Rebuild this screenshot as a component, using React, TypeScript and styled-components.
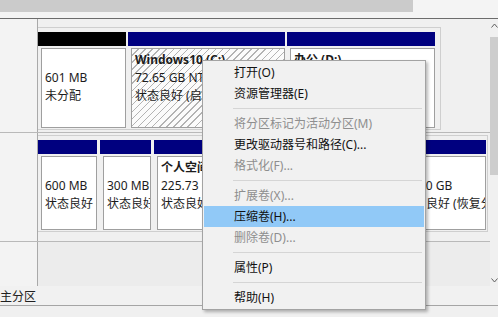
import React from "react";
import styled, { createGlobalStyle, css } from "styled-components";

const GlobalStyle = createGlobalStyle`
  html, body { margin: 0; padding: 0; }
  body {
    width: 498px;
    height: 317px;
    overflow: hidden;
    background: #f0f0f0;
    font-family: "Noto Sans", "Noto Sans CJK SC", sans-serif;
  }
  * { box-sizing: border-box; }
`;

const Page = styled.div`
  position: relative;
  width: 498px;
  height: 317px;
  display: flex;
  flex-direction: column;
  overflow: hidden;
  background: #f0f0f0;
`;

const TopStrip = styled.div`
  height: 18px;
  display: flex;
  background: #f4f4f4;
`;

const TitleBar = styled.div`
  width: 413px;
  height: 12px;
  background: #cbcbcb;
`;

const Rule = styled.div<{ $color: string }>`
  height: 1px;
  flex: none;
  background: ${(p) => p.$color};
`;

const Main = styled.div`
  display: flex;
  height: 267px;
`;

const DiskList = styled.div`
  width: 490px;
  display: flex;
  flex-direction: column;
`;

const DiskRow = styled.div<{ $h: number; $line?: boolean }>`
  display: flex;
  height: ${(p) => p.$h}px;
  flex: none;
  border-bottom: ${(p) => (p.$line ? "1px solid #b9b9b9" : "none")};
`;

const LabelCell = styled.div`
  width: 38px;
  border-right: 1px solid #a9a9a9;
  background: #f3f3f3;
`;

const DiskBody = styled.div<{ $top: number; $shade?: boolean }>`
  flex: 1;
  padding-top: ${(p) => p.$top}px;
  background: ${(p) => (p.$shade ? "#ececec" : "#f0f0f0")};
`;

const Frame = styled.div<{ $w: number; $gap: number }>`
  width: ${(p) => p.$w}px;
  display: flex;
  gap: ${(p) => p.$gap}px;
  border: 1px solid #cfcfcf;
  border-left: none;
  padding: 4px 0 1px 0;
`;

const Partition = styled.div<{ $w: number }>`
  width: ${(p) => p.$w}px;
  flex: none;
  display: flex;
  flex-direction: column;
`;

const Header = styled.div<{ $color: string }>`
  height: 14px;
  background: ${(p) => p.$color};
`;

const PartBody = styled.div<{ $h: number; $hatch?: boolean }>`
  height: ${(p) => p.$h}px;
  margin: 2px 0 0 3px;
  border: 1px solid #9f9f9f;
  padding: 2px 0 0 3px;
  overflow: hidden;
  white-space: nowrap;
  font-size: 12px;
  line-height: 18px;
  color: #1c1c1c;
  ${(p) =>
    p.$hatch
      ? css`
          background: repeating-linear-gradient(
            135deg,
            #fbfbfb 0 4px,
            #b3b3b3 4px 5px
          );
        `
      : css`
          background: #ffffff;
        `}
`;

const Line = styled.div<{ $bold?: boolean }>`
  height: 18px;
  font-weight: ${(p) => (p.$bold ? 700 : 400)};
`;

const Scrollbar = styled.div`
  width: 8px;
  display: flex;
  flex-direction: column;
  align-items: center;
  background: #f0f0f0;
`;

const ArrowBox = styled.div`
  height: 12px;
  width: 8px;
  display: flex;
  align-items: center;
  justify-content: center;
`;

const Thumb = styled.div`
  width: 8px;
  height: 138px;
  margin-top: 6px;
  background: #cdcdcd;
`;

const Spacer = styled.div`
  flex: 1;
`;

const Legend = styled.div`
  height: 19px;
  display: flex;
  align-items: center;
  font-size: 12px;
  color: #202020;
  padding-top: 1px;
  background: #f1f1f1;
`;

const Menu = styled.div`
  position: absolute;
  left: 202px;
  top: 60px;
  width: 224px;
  padding: 1px;
  background: #f1f1f1;
  border: 1px solid #a3a3a3;
  box-shadow: 2px 2px 3px rgba(0, 0, 0, 0.28);
  font-size: 12px;
`;

const Item = styled.div<{ $disabled?: boolean; $active?: boolean }>`
  height: 21px;
  line-height: 21px;
  padding-left: 30px;
  white-space: nowrap;
  color: ${(p) => (p.$disabled ? "#8e8e8e" : "#111111")};
  background: ${(p) => (p.$active ? "#91c9f7" : "transparent")};
`;

const Separator = styled.div`
  height: 9px;
  display: flex;
  align-items: center;
  padding-left: 29px;
  padding-right: 2px;
  &::after {
    content: "";
    flex: 1;
    height: 1px;
    background: #d5d5d5;
  }
`;

type Part = {
  w: number;
  color: string;
  lines: [string, string, string];
  hatch?: boolean;
};

const disk0: Part[] = [
  { w: 88, color: "#000000", lines: ["", "601 MB", "未分配"] },
  {
    w: 157,
    color: "#00007f",
    lines: ["Windows10 (C:)", "72.65 GB NTFS", "状态良好 (启动, 页面文件, 故障转储, 主分区)"],
    hatch: true,
  },
  { w: 148, color: "#00007f", lines: ["办公 (D:)", "150.00 GB NTFS", "状态良好 (主分区)"] },
];

const disk1: Part[] = [
  { w: 59, color: "#00007f", lines: ["", "600 MB", "状态良好 (EFI 系统分区)"] },
  { w: 51, color: "#00007f", lines: ["", "300 MB", "状态良好 (OEM 分区)"] },
  { w: 238, color: "#00007f", lines: ["个人空间 (E:)", "225.73 GB NTFS", "状态良好 (主分区)"] },
  { w: 91, color: "#00007f", lines: ["", "20.00 GB", "状态良好 (恢复分区)"] },
];

const Chevron = ({ up }: { up?: boolean }) => (
  <svg width="7" height="5" viewBox="0 0 7 5">
    <polyline
      points={up ? "0.5,4.5 3.5,1 6.5,4.5" : "0.5,0.5 3.5,4 6.5,0.5"}
      fill="none"
      stroke="#606060"
      strokeWidth="1"
    />
  </svg>
);

const Partitions = ({ parts, h }: { parts: Part[]; h: number }) => (
  <>
    {parts.map((p, i) => (
      <Partition key={i} $w={p.w}>
        <Header $color={p.color} />
        <PartBody $h={h} $hatch={p.hatch}>
          <Line $bold>{p.lines[0] || "\u00a0"}</Line>
          <Line>{p.lines[1]}</Line>
          <Line>{p.lines[2]}</Line>
        </PartBody>
      </Partition>
    ))}
  </>
);

type MenuEntry = { label?: string; disabled?: boolean; active?: boolean; sep?: boolean };

const menu: MenuEntry[] = [
  { label: "打开(O)" },
  { label: "资源管理器(E)" },
  { sep: true },
  { label: "将分区标记为活动分区(M)", disabled: true },
  { label: "更改驱动器号和路径(C)..." },
  { label: "格式化(F)...", disabled: true },
  { sep: true },
  { label: "扩展卷(X)...", disabled: true },
  { label: "压缩卷(H)...", active: true },
  { label: "删除卷(D)...", disabled: true },
  { sep: true },
  { label: "属性(P)" },
  { sep: true },
  { label: "帮助(H)" },
];

export default function App() {
  return (
    <>
      <GlobalStyle />
      <Page>
        <TopStrip>
          <TitleBar />
        </TopStrip>
        <Rule $color="#6c6c6c" />
        <Main>
          <DiskList>
            <DiskRow $h={114} $line>
              <LabelCell />
              <DiskBody $top={8}>
                <Frame $w={403} $gap={2}>
                  <Partitions parts={disk0} h={80} />
                </Frame>
              </DiskBody>
            </DiskRow>
            <DiskRow $h={109} $line>
              <LabelCell />
              <DiskBody $top={2}>
                <Frame $w={450} $gap={3}>
                  <Partitions parts={disk1} h={74} />
                </Frame>
              </DiskBody>
            </DiskRow>
            <DiskRow $h={44}>
              <LabelCell />
              <DiskBody $top={0} $shade />
            </DiskRow>
          </DiskList>
          <Scrollbar>
            <ArrowBox>
              <Chevron up />
            </ArrowBox>
            <Thumb />
            <Spacer />
            <ArrowBox>
              <Chevron />
            </ArrowBox>
          </Scrollbar>
        </Main>
        <Legend>主分区</Legend>
        <Rule $color="#a5a5a5" />
        <Menu>
          {menu.map((m, i) =>
            m.sep ? (
              <Separator key={i} />
            ) : (
              <Item key={i} $disabled={m.disabled} $active={m.active}>
                {m.label}
              </Item>
            )
          )}
        </Menu>
      </Page>
    </>
  );
}
